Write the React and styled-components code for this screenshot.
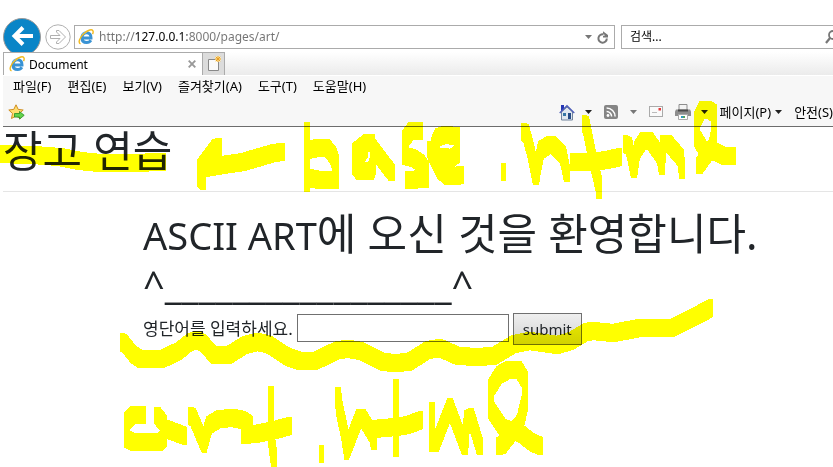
import React from "react";
import styled, { createGlobalStyle } from "styled-components";

const GlobalStyle = createGlobalStyle`
  * { box-sizing: border-box; }
  body {
    margin: 0;
    background: #fff;
    color: #212529;
    font-family: "Noto Sans", "Noto Sans CJK KR", sans-serif;
    overflow-x: hidden;
  }
  button, input { font-family: inherit; }
`;

const Screen = styled.div`
  position: relative;
  min-height: 100vh;
  overflow: hidden;
  padding-left: 3px;
`;

const NavBar = styled.div`
  display: flex;
  align-items: center;
  height: 36px;
  margin-top: 19px;
  margin-bottom: -3px;
`;

const RoundButton = styled.button`
  flex: none;
  display: block;
  padding: 0;
  border: 0;
  background: none;
  width: ${(p) => p.$size}px;
  height: ${(p) => p.$size}px;
  margin-right: ${(p) => p.$gap}px;
`;

const Field = styled.div`
  display: flex;
  align-items: center;
  gap: 5px;
  height: 24px;
  min-width: 0;
  padding: 0 5px 0 3px;
  border: 1px solid #ababab;
  background: #fff;
`;

const AddressField = styled(Field)`
  flex: 1;
  margin-right: 6px;
`;

const SearchField = styled(Field)`
  flex: none;
  width: 218px;
  margin-right: -6px;
  padding: 0 0 0 8px;
`;

const FieldInput = styled.input`
  flex: 1;
  min-width: 0;
  padding: 0;
  border: 0;
  outline: 0;
  background: none;
  font-size: 12px;
  line-height: 20px;
  color: #000;
  &::placeholder { color: #000; opacity: 1; }
`;

const AddressInput = styled(FieldInput)`
  color: transparent;
  background: linear-gradient(to right, #737373 36px, #000 36px, #000 88px, #737373 88px);
  background-clip: text;
`;

const IconButton = styled.button`
  flex: none;
  display: flex;
  align-items: center;
  padding: 0;
  border: 0;
  background: none;
`;

const TabStrip = styled.div`
  position: relative;
  display: flex;
  height: 24px;
  background: linear-gradient(#fff, #ebebeb);
  border-bottom: 1px solid #fff;
`;

const Tab = styled.div`
  display: flex;
  align-items: center;
  gap: 4px;
  width: 200px;
  padding: 0 6px 0 5px;
  border: 1px solid #ababab;
  border-bottom: 0;
  background: #fff;
  font-size: 12px;
  color: #000;
`;

const TabTitle = styled.span`
  flex: 1;
`;

const NewTab = styled.button`
  width: 22px;
  padding: 0;
  border: 1px solid #ababab;
  border-left: 0;
  border-bottom: 0;
  background: #dcdcdc;
`;

const MenuBar = styled.nav`
  display: flex;
  align-items: flex-start;
  gap: 16px;
  height: 24px;
  padding: 0 10px;
  background: #f7f7f7;
`;

const TextButton = styled.button`
  flex: none;
  display: flex;
  align-items: center;
  gap: 4px;
  padding: 0;
  border: 0;
  background: none;
  color: #000;
  font-size: 13px;
  line-height: 20px;
  white-space: nowrap;
`;

const CommandBar = styled.div`
  display: flex;
  align-items: center;
  justify-content: space-between;
  height: 27px;
  padding: 0 0 2px 5px;
  background: #f7f7f7;
  border-bottom: 1px solid #6d6d6d;
`;

const CommandGroup = styled.div`
  display: flex;
  align-items: center;
  gap: ${(p) => p.$gap}px;
`;

const SiteHeader = styled.header`
  height: 65px;
  border-bottom: 1px solid #e5e5e5;
`;

const Title = styled.h1`
  margin: 0;
  font-size: 43px;
  line-height: 48px;
  font-weight: 400;
`;

const Main = styled.main`
  padding: 18px 24px 0 140px;
`;

const Latin = styled.span`
  font-size: 38px;
`;

const WordForm = styled.form`
  display: flex;
  align-items: flex-start;
  gap: 4px;
  margin-top: 5px;
  font-size: 17px;
  line-height: 32px;
  white-space: nowrap;
`;

const WordInput = styled.input`
  width: 212px;
  height: 28px;
  margin-top: 1px;
  padding: 2px 4px;
  border: 1px solid #707070;
  background: #fff;
  font-size: 16px;
`;

const Submit = styled.button`
  height: 32px;
  padding: 0 9px;
  border: 1px solid #707070;
  background: linear-gradient(#efefef, #d2d2d2);
  color: #212529;
  font-size: 15px;
  line-height: 30px;
`;

const MarkerLayer = styled.svg`
  position: absolute;
  top: 0;
  left: 0;
  mix-blend-mode: multiply;
  pointer-events: none;
`;

function BackIcon() {
  return (
    <svg width="38" height="38" viewBox="0 0 38 38">
      <circle cx="19" cy="19" r="18.5" fill="#0a85c7" stroke="#9a9a9a" />
      <path d="M30 18H12M20 9.500 11.500 18l8.500 8.500" fill="none" stroke="#fff" strokeWidth="4" />
    </svg>
  );
}

function ForwardIcon() {
  return (
    <svg width="26" height="26" viewBox="0 0 26 26" fill="none" stroke="#b0b0b0">
      <circle cx="13" cy="13" r="12.2" />
      <path d="M5.500 11.500H15L11.500 8V6.500h2.500L20.500 13 14 19.500h-2.500V18L15 14.500H5.500z" />
    </svg>
  );
}

function BrowserIcon() {
  return (
    <svg width="16" height="16" viewBox="0 0 16 16" fill="none">
      <path d="M4.200 9h8.800c.2-3.500-1.800-5.300-4.400-5.300C5.800 3.700 4 5.800 4 8.700c0 3 1.900 4.800 4.700 4.800 2 0 3.300-.8 4.200-2.300" stroke="#3a93d4" strokeWidth="3" />
      <path d="M4 6.300c1-2 2.600-2.900 4.600-2.900" stroke="#8ccbf1" strokeWidth="1.300" />
      <path d="M2.500 14.800C-.3 13.800 1.600 8.600 6 4.500 10 .8 14.300-.2 15 2c.3.900.1 2-.5 3.100" stroke="#f2b91d" strokeWidth="1.400" />
    </svg>
  );
}

function Caret({ color = "#222" }) {
  return (
    <svg width="7" height="4" viewBox="0 0 7 4">
      <path d="M0 0h7L3.500 4z" fill={color} />
    </svg>
  );
}

function RefreshIcon() {
  return (
    <svg width="12" height="13" viewBox="0 0 12 13">
      <path d="M9.800 7.500A4.200 4.200 0 1 1 6.500 3.400" fill="none" stroke="#777" strokeWidth="2" />
      <path d="M6 .2 11 4v2.500H6V5l2-.8L6 2.600z" fill="#777" />
    </svg>
  );
}

function SearchIcon() {
  return (
    <svg width="13" height="14" viewBox="0 0 13 14" fill="none" stroke="#777">
      <circle cx="8" cy="5" r="4" strokeWidth="1.800" />
      <path d="m5 8-4 5" strokeWidth="2.200" />
    </svg>
  );
}

function CloseIcon() {
  return (
    <svg width="8" height="8" viewBox="0 0 8 8">
      <path d="m.7.7 6.600 6.600m0-6.600L.7 7.300" stroke="#999" strokeWidth="1.900" />
    </svg>
  );
}

function NewTabIcon() {
  return (
    <svg width="18" height="20" viewBox="0 0 18 20">
      <path d="M3.500 6.500h10v11h-10z" fill="#fafafa" stroke="#888" />
      <circle cx="13" cy="6" r="3" fill="#fff0bd" />
      <path d="M13 3v6M10 6h6M10.800 3.800l4.400 4.400m0-4.400-4.400 4.400" stroke="#e8a023" />
    </svg>
  );
}

function FavoriteIcon() {
  return (
    <svg width="17" height="16" viewBox="0 0 17 16">
      <path d="m8 .8 2.200 4.600 5 .6-3.700 3.400 1 5L8 12l-4.500 2.500 1-5L.8 6l5-.6z" fill="#ffdf70" stroke="#cf8d20" />
      <path d="M6.500 9.500h5v-2l4.700 3.800-4.700 3.800v-2h-5z" fill="#62d34b" stroke="#278d22" strokeWidth=".8" />
    </svg>
  );
}

function HomeIcon() {
  return (
    <svg width="16" height="17" viewBox="0 0 16 17">
      <path d="M2 1h3v6H2z" fill="#2637b5" />
      <path d="M2.500 8 8 3l5.500 5v8h-11z" fill="#dfe6ef" stroke="#71839c" />
      <path d="M.7 9 8 1.700 15.300 9" fill="none" stroke="#4c5cb8" strokeWidth="1.300" />
      <path d="M4 9h3v3H4z" fill="#3675a5" />
      <path d="M9 9h3v6H9z" fill="#254a85" />
    </svg>
  );
}

function FeedIcon() {
  return (
    <svg width="14" height="14" viewBox="0 0 14 14">
      <rect width="14" height="14" rx="2" fill="#858585" />
      <circle cx="4" cy="10.500" r="1.400" fill="#fff" />
      <path d="M2.600 6.500a5 5 0 0 1 5 5M2.600 3a8.500 8.500 0 0 1 8.500 8.500" fill="none" stroke="#fff" strokeWidth="1.500" />
    </svg>
  );
}

function MailIcon() {
  return (
    <svg width="14" height="12" viewBox="0 0 14 12">
      <rect x=".5" y=".5" width="13" height="10" fill="#fafafa" stroke="#aaa" />
      <path d="M9.500 2H12v2.500H9.500z" fill="#e23b3b" />
      <path d="M3 6.500h5" stroke="#bbb" />
    </svg>
  );
}

function PrinterIcon() {
  return (
    <svg width="16" height="16" viewBox="0 0 16 16">
      <path d="M4 .5h8V7H4z" fill="#f3f3f3" stroke="#8d8d8d" />
      <path d="M1 5.500h14l1 2v4.500H0V7.500z" fill="#8d8d8d" />
      <path d="M3 5.500h10v2H3z" fill="#4a4a4a" />
      <path d="M3.500 10.500h9v5h-9z" fill="#fff" stroke="#aaa" />
      <path d="M6 12h2v2H6z" fill="#2c9bc1" />
      <path d="M8 12h2v2H8z" fill="#55a05c" />
    </svg>
  );
}

const markerStrokes = [
  "M-3 154 33 155 60 157 80 161 100 163 131 163 164 162",
  "M220 147 215 148 200 168 200 178 204 182M283 152 274 153 243 162 223 165 205 168",
  "M307 130V184M307 150 318 148 327 148 333 155 336 164 336 180 320 180 309 178",
  "M373 143 366 143 355 152 355 166 359 171 371 171 373 165 373 148 385 164 392 173M365 149 358 158",
  "M421 131 411 131 405 139 405 156 413 158 421 163 426 170 426 179 407 180",
  "M430 149 433 156 452 158 457 154 457 136 445 135 438 137 434 146 434 158 440 170 447 176 455 176 462 175",
  "M503 172H504",
  "M523 132 526 133 531 152 536 177 538 164 541 150 549 145 553 145 563 155 567 174",
  "M584 124 586 125 592 155 599 185 599 191M572 162 592 162 607 160 620 157",
  "M625 144 629 146 634 170 637 150 643 141 650 141 660 155 662 167 663 144 669 144 681 158 682 171",
  "M699 166 702 162 712 148 714 138 714 113 709 110 702 110 697 120 697 138 704 150 716 152 724 156 734 156",
  "M122 342 125 344 133 354 140 359 162 359 179 351 190 342 197 340 203 343 214 355 229 355 245 345 257 342 268 344 288 357 300 361 315 361 338 350 349 349 361 351 383 362 395 363 409 362 428 350 440 348 458 356 477 357 494 356 514 344 530 341 557 345 571 341 586 332 593 331 613 333 640 328 672 328 698 315 711 308",
  "M144 415 133 415 127 421 127 439 133 442 160 442 164 438 164 424 157 415M164 428 185 436",
  "M190 416 193 417 204 443 209 425 219 419 233 418 243 420 251 425",
  "M271 394 271 436 274 459M243 435 256 434 275 430 290 426",
  "M321 454H322",
  "M338 395 339 407 344 430 347 449 359 418 363 418 373 435 374 442",
  "M396 387V449M373 429 396 427 408 425 421 420",
  "M432 410V443L436 443 450 407 465 447 467 419 471 417 480 447",
  "M498 446 503 445 520 423 525 402 525 380 519 370 508 370 499 375 491 388 491 410 503 428 520 433 533 443 541 446",
];

function Marker() {
  return (
    <MarkerLayer width="833" height="467" viewBox="0 0 833 467" aria-hidden="true">
      <defs>
        <filter id="nib" filterUnits="userSpaceOnUse" x="-10" y="0" width="843" height="467" colorInterpolationFilters="sRGB">
          <feMorphology operator="dilate" radius="2 8" />
        </filter>
      </defs>
      <g filter="url(#nib)" fill="none" stroke="#ff0" strokeWidth="2" shapeRendering="crispEdges">
        {markerStrokes.map((d) => (
          <path key={d} d={d} />
        ))}
      </g>
    </MarkerLayer>
  );
}

const menus = ["파일(F)", "편집(E)", "보기(V)", "즐겨찾기(A)", "도구(T)", "도움말(H)"];

export default function App() {
  return (
    <Screen>
      <GlobalStyle />
      <NavBar>
        <RoundButton $size={38} $gap={4} aria-label="뒤로"><BackIcon /></RoundButton>
        <RoundButton $size={26} $gap={3} aria-label="앞으로"><ForwardIcon /></RoundButton>
        <AddressField>
          <BrowserIcon />
          <AddressInput aria-label="주소" defaultValue="http://127.0.0.1:8000/pages/art/" />
          <IconButton aria-label="주소 목록"><Caret color="#777" /></IconButton>
          <IconButton aria-label="새로 고침"><RefreshIcon /></IconButton>
        </AddressField>
        <SearchField>
          <FieldInput aria-label="검색" placeholder="검색..." />
          <IconButton aria-label="검색 실행"><SearchIcon /></IconButton>
        </SearchField>
      </NavBar>
      <TabStrip>
        <Tab>
          <BrowserIcon />
          <TabTitle>Document</TabTitle>
          <IconButton aria-label="탭 닫기"><CloseIcon /></IconButton>
        </Tab>
        <NewTab aria-label="새 탭"><NewTabIcon /></NewTab>
      </TabStrip>
      <MenuBar>
        {menus.map((label) => <TextButton key={label}>{label}</TextButton>)}
      </MenuBar>
      <CommandBar>
        <IconButton aria-label="즐겨찾기에 추가"><FavoriteIcon /></IconButton>
        <CommandGroup $gap={12}>
          <CommandGroup $gap={10}>
            <IconButton aria-label="홈"><HomeIcon /></IconButton>
            <IconButton aria-label="홈 메뉴"><Caret /></IconButton>
          </CommandGroup>
          <CommandGroup $gap={12}>
            <IconButton aria-label="피드"><FeedIcon /></IconButton>
            <IconButton aria-label="피드 메뉴"><Caret color="#777" /></IconButton>
          </CommandGroup>
          <CommandGroup $gap={12}>
            <IconButton aria-label="메일 읽기"><MailIcon /></IconButton>
            <CommandGroup $gap={10}>
              <IconButton aria-label="인쇄"><PrinterIcon /></IconButton>
              <IconButton aria-label="인쇄 메뉴"><Caret /></IconButton>
            </CommandGroup>
          </CommandGroup>
          <TextButton>페이지(P) <Caret /></TextButton>
          <TextButton>안전(S)</TextButton>
        </CommandGroup>
      </CommandBar>
      <SiteHeader>
        <Title>장고 연습</Title>
      </SiteHeader>
      <Main>
        <Title as="h2">
          <Latin>ASCII ART</Latin>에 오신 것을 환영합니다. <Latin>^_________________^</Latin>
        </Title>
        <WordForm onSubmit={(e) => e.preventDefault()}>
          <label htmlFor="word">영단어를 입력하세요.</label>
          <WordInput id="word" type="text" />
          <Submit type="submit">submit</Submit>
        </WordForm>
      </Main>
      <Marker />
    </Screen>
  );
}
